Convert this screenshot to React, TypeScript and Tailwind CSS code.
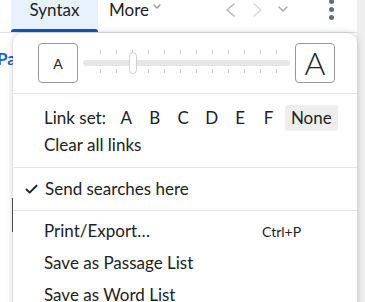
import { Check } from 'lucide-react'

const font = { fontFamily: '"Source Sans Pro", Lato, "Noto Sans", sans-serif' }

const Divider = () => <div className="h-px bg-[#e4e4e4]" />

const Chev = ({ d, w, h, color, sw }: { d: string; w: number; h: number; color: string; sw: number }) => (
  <svg width={w} height={h} viewBox={`0 0 ${w} ${h}`} fill="none" stroke={color} strokeWidth={sw} strokeLinecap="round" strokeLinejoin="round">
    <path d={d} />
  </svg>
)

export default function App() {
  const ticks = Array(12).fill('')
  return (
    <div className="relative w-[365px] h-[302px] overflow-hidden bg-white text-[#222]" style={font}>
      {/* top bar */}
      <div className="flex items-stretch h-[33px] border-b border-[#e2e2e2]">
        <div className="ml-[11px] w-[87px] flex justify-center bg-[#e8f2fc] relative text-[17px] leading-[20px]">
          Syntax
          <div className="absolute bottom-0 left-0 right-0 h-[3px] rounded-t-[3px] bg-[#1a4fcc]" />
        </div>
        <div className="flex items-start ml-[11px] text-[17px] leading-[20px]">
          More
          <div className="ml-[4px] mt-[4px]">
            <Chev d="M1 1 L4 4 L7 1" w={8} h={6} color="#8a94a6" sw={1.3} />
          </div>
        </div>
        <div className="flex items-start ml-[64px] pt-[3px]">
          <Chev d="M9 1 L2 7 L9 13" w={11} h={14} color="#b8b8b8" sw={1.6} />
          <div className="ml-[16px]">
            <Chev d="M2 1 L9 7 L2 13" w={11} h={14} color="#dadada" sw={1.6} />
          </div>
          <div className="ml-[15px] mt-[3px]">
            <Chev d="M1 1 L5 5 L9 1" w={10} h={6} color="#a4a4a4" sw={1.4} />
          </div>
        </div>
        <div className="flex flex-col items-center gap-[3px] ml-[41px] mt-[-1px]">
          <div className="w-[5px] h-[5px] rounded-full bg-[#5d6d88]" />
          <div className="w-[5px] h-[5px] rounded-full bg-[#5d6d88]" />
          <div className="w-[5px] h-[5px] rounded-full bg-[#5d6d88]" />
        </div>
      </div>
      {/* background content */}
      <div className="absolute left-[-3px] top-[46px] text-[#1a5ed8] font-bold text-[17px]">Pa</div>
      <div className="absolute left-[12px] top-[198px] w-px h-[34px] bg-[#555]" />
      <div className="absolute right-0 top-0 w-[8px] h-full bg-[#eeeeee]" />

      {/* menu */}
      <div className="absolute left-[13px] top-[33px] w-[344px] h-[290px] bg-white rounded-[10px] shadow-[0_0_6px_rgba(0,0,0,0.22)]">
        <div className="flex items-center h-[60px] pl-[25px] pr-[22px]">
          <div className="w-[40px] h-[40px] border border-[#999] rounded-[4px] flex items-center justify-center text-[14px]">A</div>
          <div className="relative flex-1 mx-[5px] h-[40px]">
            <div className="absolute left-0 right-0 top-[17px] h-[6px] rounded-full bg-[#e6e6e6]" />
            {ticks.map((_, i) => (
              <div key={i} className="absolute top-[7px] h-[26px] w-px" style={{ left: 17 + i * 16 }}>
                <div className="h-[4px] bg-[#c8c8c8]" />
                <div className="h-[15px]" />
                <div className="h-[4px] bg-[#c8c8c8]" />
              </div>
            ))}
            <div className="absolute left-[46px] top-[9px] w-[8px] h-[22px] rounded-full bg-white border border-[#d0d0d0]" />
          </div>
          <div className="w-[40px] h-[40px] border border-[#999] rounded-[4px] flex items-center justify-center text-[32px] font-light leading-none">A</div>
        </div>
        <Divider />
        <div className="px-[31px] pt-[10px] pb-[8px] text-[17px]">
          <div className="flex items-center h-[27px] whitespace-nowrap">
            <span className="shrink-0 mr-[6px]">Link set:</span>
            {['A', 'B', 'C', 'D', 'E', 'F'].map(l => (
              <span key={l} className="shrink-0 w-[28.5px] text-center">{l}</span>
            ))}
            <span className="shrink-0 ml-[2px] px-[6px] h-[26px] flex items-center bg-[#eeeeee] rounded-[3px]">None</span>
          </div>
          <div className="h-[28px] flex items-center">Clear all links</div>
        </div>
        <Divider />
        <div className="flex items-center h-[42px] pl-[11px] text-[17px]">
          <Check size={15} strokeWidth={3} className="mr-[6px]" />
          Send searches here
        </div>
        <Divider />
        <div className="px-[31px] pt-[4px] text-[17px]">
          <div className="flex items-center h-[32px]">
            <span className="w-[218px]">Print/Export…</span>
            <span className="text-[14px]">Ctrl+P</span>
          </div>
          <div className="flex items-center h-[32px]">Save as Passage List</div>
          <div className="flex items-center h-[31px]">Save as Word List</div>
        </div>
      </div>
    </div>
  )
}
